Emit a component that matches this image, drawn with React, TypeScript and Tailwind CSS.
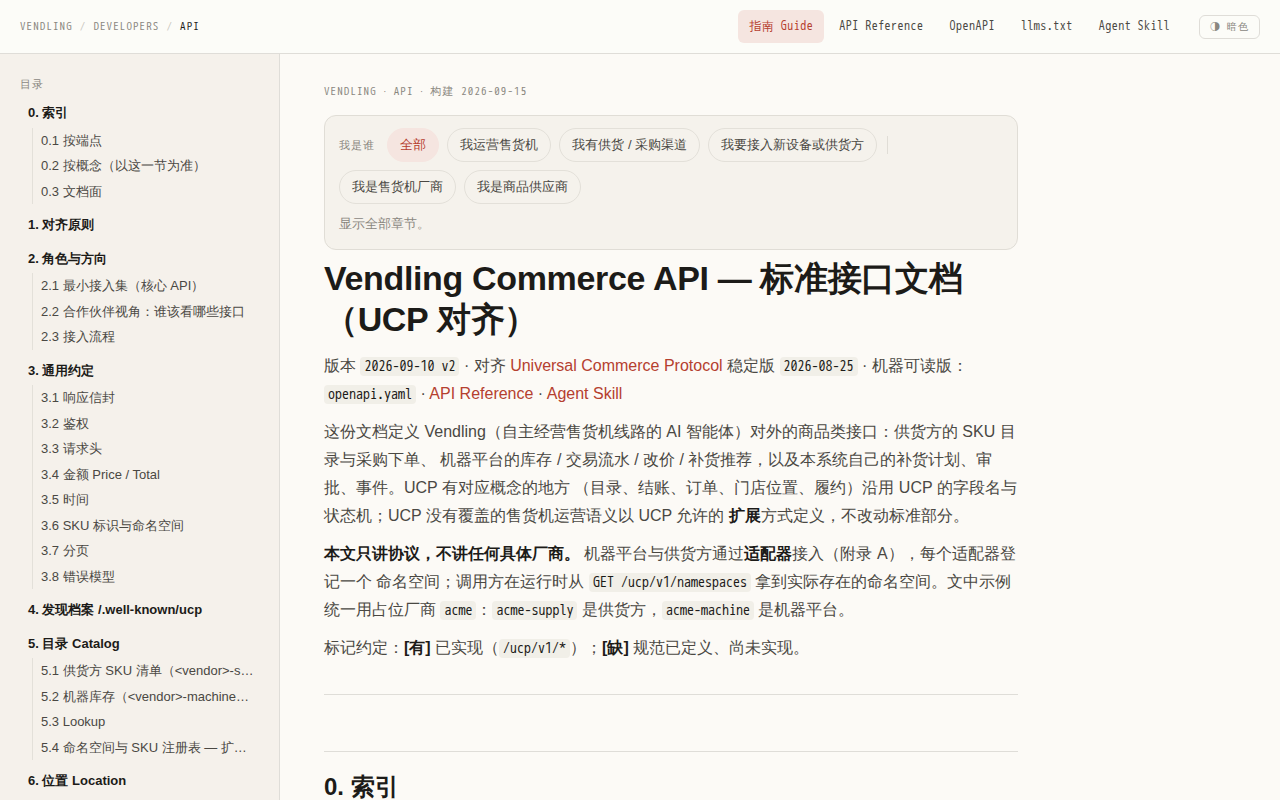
import type { ReactNode } from "react";

type TocGroup = {
  title: string;
  items?: string[];
};

const navLinks = ["指南 Guide", "API Reference", "OpenAPI", "llms.txt", "Agent Skill"];

const toc: TocGroup[] = [
  { title: "0. 索引", items: ["0.1 按端点", "0.2 按概念（以这一节为准）", "0.3 文档面"] },
  { title: "1. 对齐原则" },
  {
    title: "2. 角色与方向",
    items: ["2.1 最小接入集（核心 API）", "2.2 合作伙伴视角：谁该看哪些接口", "2.3 接入流程"]
  },
  {
    title: "3. 通用约定",
    items: [
      "3.1 响应信封",
      "3.2 鉴权",
      "3.3 请求头",
      "3.4 金额 Price / Total",
      "3.5 时间",
      "3.6 SKU 标识与命名空间",
      "3.7 分页",
      "3.8 错误模型"
    ]
  },
  { title: "4. 发现档案 /.well-known/ucp" },
  {
    title: "5. 目录 Catalog",
    items: [
      "5.1 供货方 SKU 清单（<vendor>-s…",
      "5.2 机器库存（<vendor>-machine…",
      "5.3 Lookup",
      "5.4 命名空间与 SKU 注册表 — 扩…"
    ]
  },
  { title: "6. 位置 Location" }
];

const roles = ["全部", "我运营售货机", "我有供货 / 采购渠道", "我要接入新设备或供货方"];
const partnerRoles = ["我是售货机厂商", "我是商品供应商"];

const mono = "font-['WenQuanYi_Zen_Hei_Mono','Noto_Sans_Mono_CJK_SC','Noto_Sans_CJK_SC',monospace]";

function Code({ children }: { children: ReactNode }) {
  return (
    <code className={`${mono} rounded bg-[#f1efe8] px-1 py-px text-sm leading-none text-[#1c1b18]`}>
      {children}
    </code>
  );
}

function TextLink({ children }: { children: ReactNode }) {
  return (
    <a href="#" className="text-[#b5402f]">
      {children}
    </a>
  );
}

function Strong({ children }: { children: ReactNode }) {
  return <strong className="font-bold text-[#1c1b18]">{children}</strong>;
}

function Chip({ label, active = false }: { label: string; active?: boolean }) {
  return (
    <button
      type="button"
      aria-pressed={active}
      className={`rounded-full border px-3 py-1 text-[13px] leading-6 ${
        active
          ? "border-[#f5e5e0] bg-[#f5e5e0] text-[#b5402f]"
          : "border-[#e3e0d9] text-[#4a4843]"
      }`}
    >
      {label}
    </button>
  );
}

function Header() {
  return (
    <header className="flex h-[54px] shrink-0 items-center justify-between border-b border-[#dfddd8] bg-[#fcfcf8] px-5">
      <nav
        aria-label="Breadcrumb"
        className={`${mono} flex gap-[7px] text-[11px] tracking-widest text-[#8a877f]`}
      >
        <a href="#">VENDLING</a>
        <span className="text-[#c9c6be]">/</span>
        <a href="#">DEVELOPERS</a>
        <span className="text-[#c9c6be]">/</span>
        <span className="text-[#1c1b18]">API</span>
      </nav>

      <div className="flex items-center gap-[18px]">
        <nav className={`${mono} flex gap-1 text-xs tracking-[0.04em]`}>
          {navLinks.map((label, index) => (
            <a
              key={label}
              href="#"
              className={`rounded-md px-[11px] py-1.5 leading-[21px] ${
                index === 0 ? "bg-[#f5e5e0] text-[#b5402f]" : "text-[#4a4843]"
              }`}
            >
              {label}
            </a>
          ))}
        </nav>
        <button
          type="button"
          className={`${mono} h-6 rounded-md border border-[#dfddd8] px-2.5 text-[10px] tracking-widest text-[#8a877f]`}
        >
          ◑ 暗色
        </button>
      </div>
    </header>
  );
}

function Sidebar() {
  return (
    <aside className="w-[280px] shrink-0 overflow-hidden border-r border-[#dfddd8] bg-[#f5f1eb] py-5 pr-4 pl-5">
      <p className="mb-1.5 text-[11px] leading-5 tracking-widest text-[#8a877f]">目录</p>
      <nav aria-label="目录" className="text-[13px] leading-normal">
        {toc.map((group) => (
          <div key={group.title} className="mb-2">
            <a href="#" className="block truncate px-2 py-[3px] font-bold text-[#1c1b18]">
              {group.title}
            </a>
            {group.items ? (
              <ul className="mt-0.5 ml-3 border-l border-[#e3e0d9]">
                {group.items.map((item) => (
                  <li key={item}>
                    <a href="#" className="block truncate px-2 py-[3px] text-[#4a4843]">
                      {item}
                    </a>
                  </li>
                ))}
              </ul>
            ) : null}
          </div>
        ))}
      </nav>
    </aside>
  );
}

function RoleFilter() {
  return (
    <section className="rounded-xl border border-[#e0ddd6] bg-[#f5f2ec] px-3.5 py-3">
      <div className="flex flex-wrap items-center gap-2">
        <span className="mr-1 text-[11px] tracking-widest text-[#8a877f]">我是谁</span>
        {roles.map((label, index) => (
          <Chip key={label} label={label} active={index === 0} />
        ))}
        <span className="mx-0.5 h-[18px] w-px bg-[#e0ddd6]" />
        {partnerRoles.map((label) => (
          <Chip key={label} label={label} />
        ))}
      </div>
      <p className="mt-2 mb-0.5 text-[13px] leading-[23px] text-[#8a877f]">显示全部章节。</p>
    </section>
  );
}

export default function App() {
  return (
    <div className="flex h-screen flex-col overflow-hidden bg-[#fcfaf6] font-['Liberation_Sans',sans-serif] text-[#4a4843]">
      <Header />
      <div className="flex min-h-0 flex-1">
        <Sidebar />
        <main className="min-w-0 flex-1 overflow-hidden px-11 pt-7">
          <article className="max-w-[694px]">
            <p className={`${mono} mb-3.5 text-[11px] leading-[19px] tracking-widest text-[#8a877f]`}>
              VENDLING · API · 构建 2026-09-15
            </p>
            <RoleFilter />

            <h1 className="mt-2 mb-3 text-[34px] leading-[41px] font-bold tracking-[-0.01em] text-[#1c1b18]">
              Vendling Commerce API — 标准接口文档（UCP 对齐）
            </h1>

            <div className="space-y-2.5 text-base leading-7">
              <p>
                版本 <Code>2026-09-10 v2</Code> · 对齐 <TextLink>Universal Commerce Protocol</TextLink>{" "}
                稳定版 <Code>2026-08-25</Code> · 机器可读版： <Code>openapi.yaml</Code> ·{" "}
                <TextLink>API Reference</TextLink> · <TextLink>Agent Skill</TextLink>
              </p>
              <p>
                这份文档定义 Vendling（自主经营售货机线路的 AI 智能体）对外的商品类接口：供货方的 SKU
                目录与采购下单、 机器平台的库存 / 交易流水 / 改价 /
                补货推荐，以及本系统自己的补货计划、审批、事件。UCP 有对应概念的地方
                （目录、结账、订单、门店位置、履约）沿用 UCP 的字段名与状态机；UCP
                没有覆盖的售货机运营语义以 UCP 允许的 <Strong>扩展</Strong>方式定义，不改动标准部分。
              </p>
              <p>
                <Strong>本文只讲协议，不讲任何具体厂商。</Strong> 机器平台与供货方通过
                <Strong>适配器</Strong>接入（附录 A），每个适配器登记一个 命名空间；调用方在运行时从{" "}
                <Code>GET /ucp/v1/namespaces</Code> 拿到实际存在的命名空间。文中示例统一用占位厂商{" "}
                <Code>acme</Code>：<Code>acme-supply</Code> 是供货方，<Code>acme-machine</Code>{" "}
                是机器平台。
              </p>
              <p>
                标记约定：<Strong>[有]</Strong> 已实现（<Code>/ucp/v1/*</Code>）；<Strong>[缺]</Strong>{" "}
                规范已定义、尚未实现。
              </p>
            </div>

            <hr className="my-8 border-[#dfddd8]" />

            <h2 className="mt-14 border-t border-[#dfddd8] pt-[19px] text-2xl leading-8 font-bold text-[#1c1b18]">
              0. 索引
            </h2>
          </article>
        </main>
      </div>
    </div>
  );
}
